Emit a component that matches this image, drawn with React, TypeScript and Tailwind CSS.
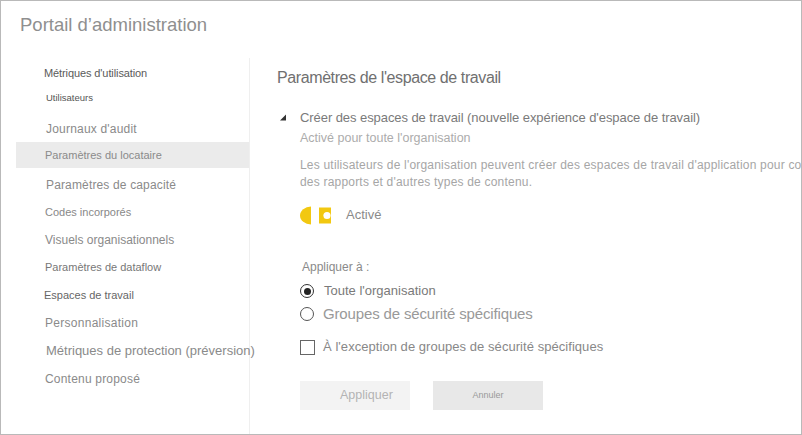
import React from "react";

const font = { fontFamily: '"Liberation Sans", Arial, sans-serif' };

function SideItem({ label, cls, h, active }: { label: string; cls: string; h: string; active?: boolean }) {
  return (
    <div className={`flex items-center ${h} ${active ? "bg-[#ebebeb]" : ""}`}>
      <span className={`whitespace-nowrap ${cls}`}>{label}</span>
    </div>
  );
}

export default function App() {
  return (
    <div
      className="relative w-[802px] h-[435px] overflow-hidden bg-white border border-[#b9b9b9] flex flex-col"
      style={font}
    >
      <div className="h-[57px] shrink-0 pl-[19px] pt-[13px]">
        <div className="text-[18.5px] leading-[22px] text-[#8f8f8f] whitespace-nowrap">Portail d’administration</div>
      </div>
      <div className="flex flex-1 min-h-0">
        <div className="w-[249px] shrink-0 pl-[15px] border-r border-[#efefef]">
          <SideItem label="Métriques d'utilisation" h="h-[30px]" cls="pl-[28px] text-[11px] text-[#5a5a5a] tracking-[-0.1px]" />
          <SideItem label="Utilisateurs" h="h-[20px]" cls="pl-[30px] text-[9.5px] text-[#555]" />
          <div className="h-[34px] pt-[7px] flex items-center">
            <span className="pl-[30px] text-[12px] text-[#8a8a8a] tracking-[0.2px] whitespace-nowrap">Journaux d'audit</span>
          </div>
          <SideItem label="Paramètres du locataire" h="h-[26px]" active cls="pl-[29px] text-[11px] text-[#8a8a8a]" />
          <div className="h-[3px]" />
          <SideItem label="Paramètres de capacité" h="h-[28px]" cls="pl-[30px] text-[12px] text-[#8a8a8a] tracking-[0.15px]" />
          <SideItem label="Codes incorporés" h="h-[26px]" cls="pl-[29px] text-[11px] text-[#888]" />
          <SideItem label="Visuels organisationnels" h="h-[29px]" cls="pl-[29px] text-[12px] text-[#8a8a8a]" />
          <SideItem label="Paramètres de dataflow" h="h-[27px]" cls="pl-[29px] text-[11px] text-[#777]" />
          <SideItem label="Espaces de travail" h="h-[28px]" cls="pl-[28px] text-[11px] text-[#666]" />
          <SideItem label="Personnalisation" h="h-[28px]" cls="pl-[29px] text-[12px] text-[#8a8a8a] tracking-[0.28px]" />
          <SideItem label="Métriques de protection (préversion)" h="h-[28px]" cls="pl-[30px] text-[13px] text-[#8a8a8a]" />
          <SideItem label="Contenu proposé" h="h-[28px]" cls="pl-[29px] text-[12px] text-[#8a8a8a] tracking-[0.2px]" />
        </div>
        <div className="flex-1 min-w-0 overflow-hidden">
          <div className="pl-[27px] mt-[10px] text-[16px] leading-[20px] text-[#707070] tracking-[-0.4px] whitespace-nowrap">
            Paramètres de l'espace de travail
          </div>
          <div className="pl-[50px]">
            <div className="mt-[21px] flex items-center h-[18px] -ml-[21px] whitespace-nowrap">
              <svg width="21" height="18" viewBox="0 0 21 18">
                <path d="M1 11.5 L7 11.5 L7 5.5 Z" fill="#333" />
              </svg>
              <span className="text-[13px] text-[#7a7a7a] tracking-[-0.07px]">
                Créer des espaces de travail (nouvelle expérience d'espace de travail)
              </span>
            </div>
            <div className="mt-[2px] h-[18px] leading-[18px] text-[12.5px] text-[#acacac] whitespace-nowrap">
              Activé pour toute l'organisation
            </div>
            <div className="mt-[10px] text-[12px] leading-[17px] text-[#a6a6a6] tracking-[0.2px] whitespace-nowrap">
              Les utilisateurs de l'organisation peuvent créer des espaces de travail d'application pour collaborer sur des tableaux de bord,
              <br />
              des rapports et d'autres types de contenu.
            </div>
            <div className="mt-[15px] h-[18px] flex items-center">
              <svg width="32" height="19" viewBox="0 0 32 19">
                <path d="M11 0.5 A11 9 0 0 0 11 18.5 Z" fill="#f2c811" />
                <path d="M19 1.5 H31 V17.5 H19 Z" fill="#f2c811" />
                <circle cx="27" cy="9.5" r="3.6" fill="#fff" />
              </svg>
              <span className="ml-[14px] text-[13px] text-[#8a8a8a]">Activé</span>
            </div>
            <div className="mt-[35px] h-[16px] leading-[16px] pl-[2px] text-[12px] text-[#8a8a8a]">Appliquer à :</div>
            <div className="mt-[7px] h-[18px] flex items-center">
              <span className="w-[14px] h-[14px] rounded-full border-[1.5px] border-[#333] flex items-center justify-center">
                <span className="w-[7px] h-[7px] rounded-full bg-[#222]" />
              </span>
              <span className="ml-[10px] text-[13px] text-[#7a7a7a] whitespace-nowrap">Toute l'organisation</span>
            </div>
            <div className="mt-[4px] h-[20px] flex items-center">
              <span className="w-[14px] h-[14px] rounded-full border-[1.5px] border-[#555]" />
              <span className="ml-[9px] text-[15px] text-[#999] tracking-[-0.15px] whitespace-nowrap">Groupes de sécurité spécifiques</span>
            </div>
            <div className="mt-[14px] h-[18px] flex items-center">
              <span className="w-[15px] h-[15px] border-[1.5px] border-[#666]" />
              <span className="ml-[8px] text-[13px] text-[#888] tracking-[0.05px] whitespace-nowrap">
                À l'exception de groupes de sécurité spécifiques
              </span>
            </div>
            <div className="mt-[25px] flex gap-[23px]">
              <div className="w-[110px] h-[29px] bg-[#f3f3f3] flex items-center pl-[40px]">
                <span className="text-[12.5px] text-[#b4b4b4]">Appliquer</span>
              </div>
              <div className="w-[110px] h-[29px] bg-[#e8e8e8] flex items-center justify-center">
                <span className="text-[9px] text-[#999]">Annuler</span>
              </div>
            </div>
          </div>
        </div>
      </div>
    </div>
  );
}
